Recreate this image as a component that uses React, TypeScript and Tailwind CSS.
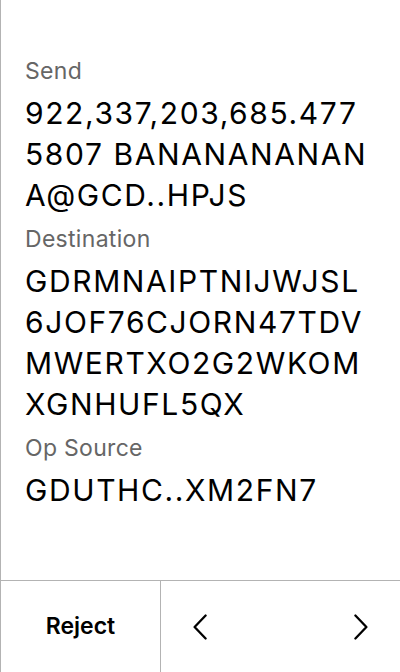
import React from 'react';

const fields = [
  { label: 'Send', lines: ['922,337,203,685.477', '5807 BANANANANAN', 'A@GCD..HPJS'] },
  {
    label: 'Destination',
    lines: ['GDRMNAIPTNIJWJSL', '6JOF76CJORN47TDV', 'MWERTXO2G2WKOM', 'XGNHUFL5QX'],
  },
  { label: 'Op Source', lines: ['GDUTHC..XM2FN7'] },
];

const Chevron: React.FC<{ dir: 'left' | 'right' }> = ({ dir }) => (
  <svg width="14" height="26" viewBox="0 0 14 26" fill="none">
    <path
      d={dir === 'left' ? 'M12.6 1.5 L1.6 13 L12.6 24.5' : 'M1.4 1.5 L12.4 13 L1.4 24.5'}
      stroke="#000"
      strokeWidth="2.3"
      strokeLinecap="round"
      strokeLinejoin="round"
    />
  </svg>
);

export default function App() {
  return (
    <div className="w-[400px] h-[672px] bg-white border-l border-[#b3b3b3] flex flex-col font-['Inter','Noto_Sans',sans-serif]">
      <div className="flex-1 pl-6 pr-2 pt-[57px] flex flex-col gap-[9px]">
        {fields.map((f) => (
          <div key={f.label} className="flex flex-col gap-2">
            <div className="text-[23px] leading-[28px] tracking-[0.3px] text-[#666666]">{f.label}</div>
            <div className="flex flex-col text-[30px] leading-[41px] tracking-[1.6px] text-black whitespace-nowrap">
              {f.lines.map((l) => (
                <span key={l}>{l}</span>
              ))}
            </div>
          </div>
        ))}
      </div>
      <div className="h-[92px] border-t border-[#b3b3b3] flex">
        <div className="w-[160px] border-r border-[#b3b3b3] flex items-center justify-center text-[23px] font-semibold text-black">
          Reject
        </div>
        <div className="flex-1 flex items-center justify-between px-8">
          <Chevron dir="left" />
          <Chevron dir="right" />
        </div>
      </div>
    </div>
  );
}
